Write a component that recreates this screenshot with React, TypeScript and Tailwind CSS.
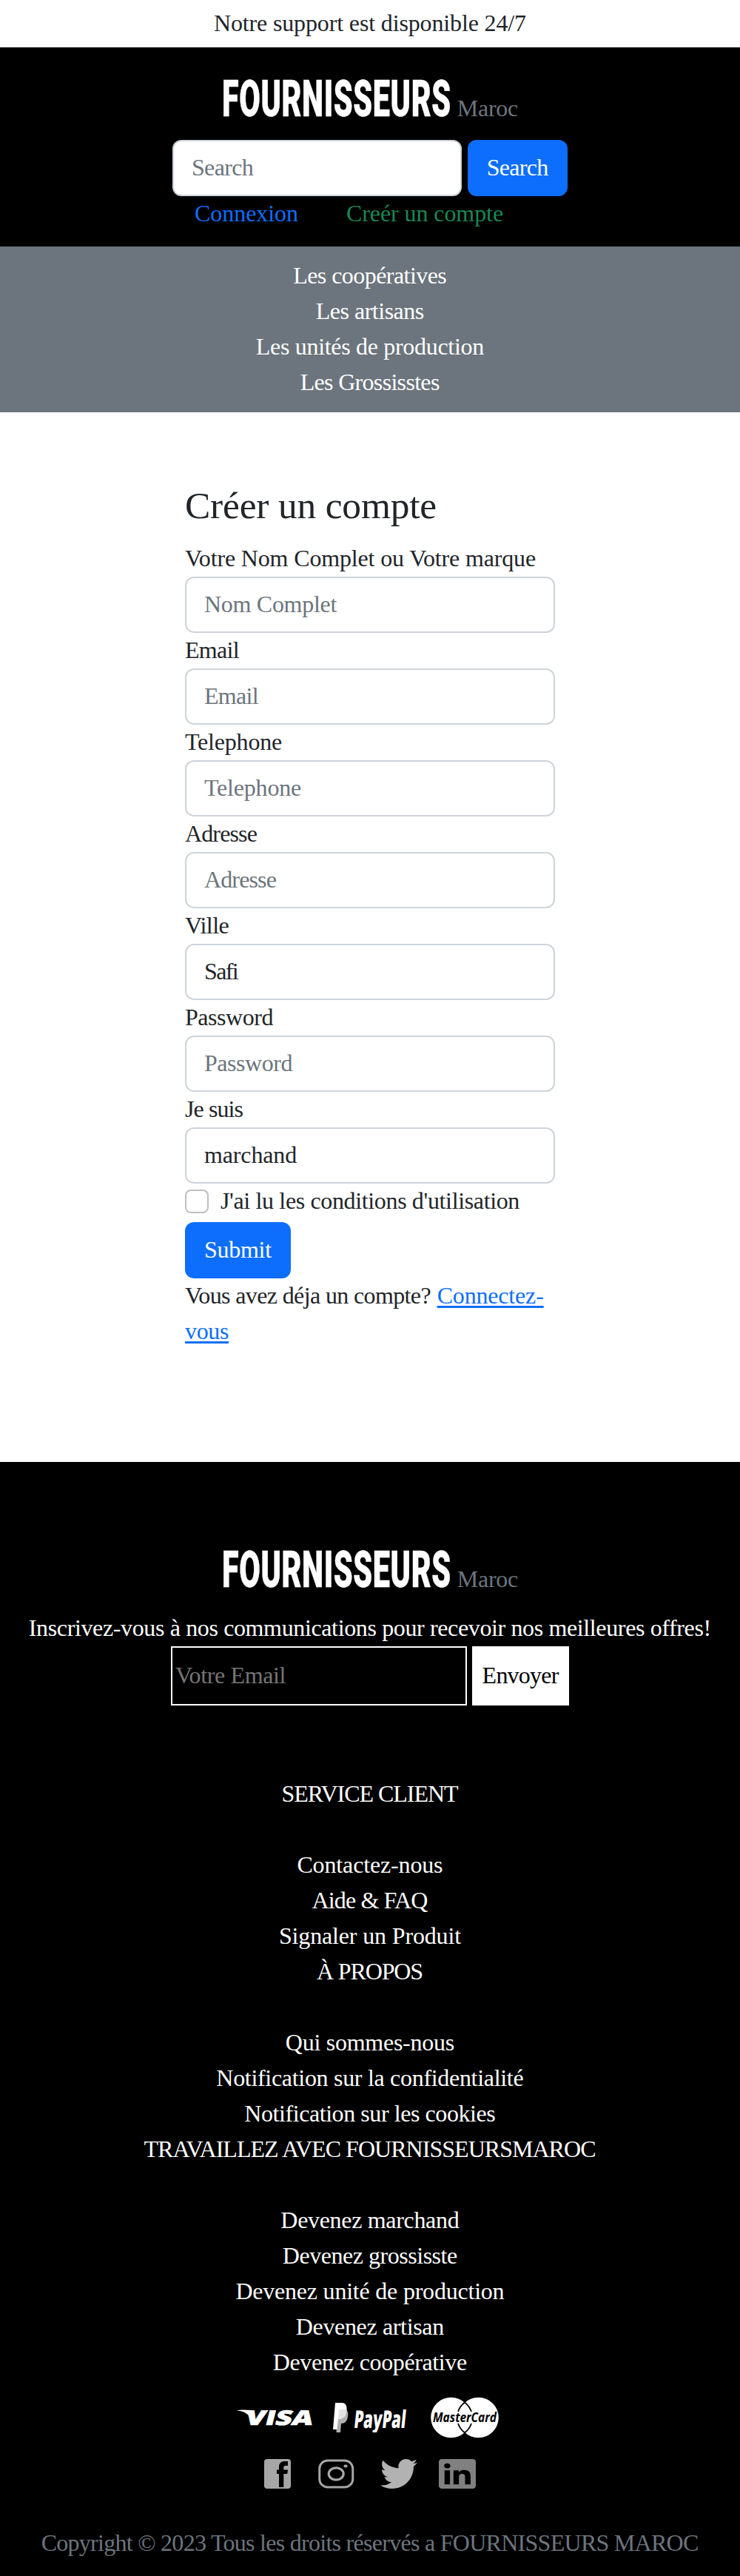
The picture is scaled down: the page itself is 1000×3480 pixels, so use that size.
import { useLayoutEffect, useRef, useState } from "react";
import type { CSSProperties, ReactNode } from "react";
import { FaLinkedin, FaTwitter } from "react-icons/fa";

type FitProps = { children: string; w: number; className?: string };

/** Text whose tracking is adjusted so the line is exactly `w` pixels wide. */
function Fit({ children, w, className = "" }: FitProps) {
  const ref = useRef<HTMLSpanElement>(null);
  const [style, setStyle] = useState<CSSProperties>({});
  useLayoutEffect(() => {
    const natural = ref.current!.getBoundingClientRect().width;
    const s = (w - natural) / children.length;
    setStyle({ letterSpacing: `${s}px`, marginRight: `${-s}px` });
  }, [w, children]);
  return (
    <span ref={ref} style={style} className={`relative -top-px inline-block whitespace-nowrap ${className}`}>
      {children}
    </span>
  );
}

/** Condensed brand name, squeezed horizontally to a fixed width. */
function Wordmark() {
  const ref = useRef<HTMLSpanElement>(null);
  const [style, setStyle] = useState<CSSProperties>({});
  useLayoutEffect(() => {
    setStyle({ transform: `scaleX(${310 / ref.current!.offsetWidth})` });
  }, []);
  return (
    <div className="flex h-[84px] items-baseline justify-center">
      <span className="inline-block w-[310px] text-left">
        <span
          ref={ref}
          style={style}
          className="inline-block origin-left font-['Roboto'] text-[69px] leading-[84px] font-black tracking-[1px] text-white [-webkit-text-stroke:0.5px_white]"
        >
          FOURNISSEURS
        </span>
      </span>
      <span className="ml-2 text-left text-[#6c757d]">
        <Fit w={82} className="top-0">Maroc</Fit>
      </span>
    </div>
  );
}

function Line({ children, w }: { children: string; w: number }) {
  return (
    <li className="h-12">
      <Fit w={w}>{children}</Fit>
    </li>
  );
}

type FieldProps = { label: string; lw: number; text: string; tw: number; filled?: boolean };

function Field({ label, lw, text, tw, filled }: FieldProps) {
  return (
    <div>
      <div className="h-12">
        <Fit w={lw}>{label}</Fit>
      </div>
      <div
        className={`flex h-19 items-center rounded-xl border-2 border-[#ced4da] bg-white px-6 ${
          filled ? "text-[#212529]" : "text-[#6c757d]"
        }`}
      >
        <Fit w={tw}>{text}</Fit>
      </div>
    </div>
  );
}

function Section({ title, w, children }: { title: string; w: number; children: ReactNode }) {
  return (
    <section>
      <h3 className="mb-12 h-12">
        <Fit w={w}>{title}</Fit>
      </h3>
      <ul>{children}</ul>
    </section>
  );
}

function Visa() {
  return (
    <svg width="100" height="22" viewBox="0 0 100 22" className="overflow-visible">
      <path d="M0 1.2C4 .3 10 .3 18 1L23 9 20 14C14 5 7 2 0 1.8Z" fill="#fff" />
      <text
        transform="translate(9 20.7) skewX(-14)"
        fontFamily="Open Sans"
        fontWeight="800"
        fontSize="27.5"
        textLength="91"
        lengthAdjust="spacingAndGlyphs"
        fill="#fff"
        stroke="#fff"
        strokeWidth="0.7"
      >
        VISA
      </text>
    </svg>
  );
}

function PayPal() {
  return (
    <svg width="100" height="40" viewBox="0 0 100 40" className="overflow-hidden">
      <path d="M6 9H16C20 10 21 14 20 19C19 25 16 28 11 28L10 40H4.500Z" fill="#b0b0b0" />
      <path d="M3 0H12C17 0 19 4 18.500 10C18 18 14 22 7 22L5.500 36H0Z" fill="#fff" />
      <path d="M8 9H16C18 9.500 18.300 9.500 18.500 10C18 18 14 22 7 22Z" fill="#e4e4e4" />
      <text
        transform="translate(27.500 34) skewX(-6)"
        fontFamily="Open Sans"
        fontWeight="800"
        fontSize="33"
        textLength="70"
        lengthAdjust="spacingAndGlyphs"
        fill="#fff"
      >
        PayPal
      </text>
    </svg>
  );
}

function MasterCard() {
  return (
    <svg width="92" height="56" viewBox="0 0 92 56">
      <circle cx="27.500" cy="28" r="27.300" fill="#fff" />
      <circle cx="64.500" cy="28" r="27.300" fill="#fff" />
      <path
        d="M46 7.500Q39.500 12.500 37 20M46 7.500Q52.500 12.500 55 20M46 48.500Q39.500 43.500 37 36M46 48.500Q52.500 43.500 55 36"
        fill="none"
        stroke="#000"
        strokeWidth="1.800"
      />
      <text
        x="3"
        y="34"
        fontFamily="Open Sans"
        fontStyle="italic"
        fontWeight="700"
        fontSize="17"
        textLength="86"
        lengthAdjust="spacingAndGlyphs"
        fill="#000"
      >
        MasterCard
      </text>
    </svg>
  );
}

function Facebook() {
  return (
    <svg width="36" height="40" viewBox="0 0 36 40">
      <rect width="36" height="40" rx="4" fill="#a6a6a6" />
      <path
        d="M20 38V20H17V14.500H20V10.500C20 5.500 23 3 28 3H32V9H29C27 9 26.300 10 26.300 11.500V14.500H32L31.300 20H26.300V38Z"
        fill="#000"
      />
    </svg>
  );
}

function Instagram() {
  return (
    <svg width="49" height="40" viewBox="0 0 49 40" fill="none" stroke="#a6a6a6">
      <rect x="1.750" y="2" width="45" height="36" rx="11" strokeWidth="3" />
      <ellipse cx="24.200" cy="20" rx="10" ry="8.200" strokeWidth="3.200" />
      <ellipse cx="37" cy="9.500" rx="2.600" ry="2" fill="#a6a6a6" stroke="none" />
    </svg>
  );
}

export default function App() {
  return (
    <div className="h-[3480px] w-[1000px] overflow-hidden bg-white font-['Liberation_Serif',serif] text-[32px] leading-[48px] text-[#212529]">
      <div className="h-16 py-2 text-center">
        <Fit w={422}>Notre support est disponible 24/7</Fit>
      </div>

      <header className="h-[269px] bg-black pt-7">
        <Wordmark />
        <div className="mt-[13px] flex gap-2 pl-[233px]">
          <div className="flex h-19 w-[391px] items-center rounded-xl border-2 border-[#ced4da] bg-white px-6 text-[#6c757d]">
            <Fit w={83}>Search</Fit>
          </div>
          <button className="flex h-19 w-[135px] items-center justify-center rounded-xl bg-[#0d6efd] text-white">
            <Fit w={83}>Search</Fit>
          </button>
        </div>
        <div className="flex pl-[263px]">
          <a className="w-[205px] text-[#0d6efd]"><Fit w={140}>Connexion</Fit></a>
          <a className="text-[#198754]"><Fit w={212}>Creér un compte</Fit></a>
        </div>
      </header>

      <nav className="bg-[#6c757d] py-4 text-center text-white">
        <ul>
          <Line w={207}>Les coopératives</Line>
          <Line w={146}>Les artisans</Line>
          <Line w={308}>Les unités de production</Line>
          <Line w={188}>Les Grossisstes</Line>
        </ul>
      </nav>

      <main className="h-[1418px] pt-24">
        <div className="mx-auto w-[500px]">
          <h2 className="mb-4 h-[62px] text-[51.4px] leading-[62px]">
            <Fit w={340}>Créer un compte</Fit>
          </h2>
          <Field label="Votre Nom Complet ou Votre marque" lw={474} text="Nom Complet" tw={179} />
          <Field label="Email" lw={73} text="Email" tw={73} />
          <Field label="Telephone" lw={131} text="Telephone" tw={131} />
          <Field label="Adresse" lw={97} text="Adresse" tw={97} />
          <Field label="Ville" lw={59} text="Safi" tw={45} filled />
          <Field label="Password" lw={119} text="Password" tw={119} />
          <Field label="Je suis" lw={78} text="marchand" tw={125} filled />
          <div className="mb-1 flex h-12 items-center">
            <span className="mr-4 size-8 rounded-lg border-2 border-[#bfbfbf]" />
            <Fit w={404}>J'ai lu les conditions d'utilisation</Fit>
          </div>
          <button className="flex h-19 w-[143px] items-center justify-center rounded-xl bg-[#0d6efd] text-white">
            <Fit w={91}>Submit</Fit>
          </button>
          <p>
            <span className="flex h-12 gap-2">
              <Fit w={332}>Vous avez déja un compte?</Fit>
              <a className="text-[#0d6efd]">
                <Fit w={144} className="underline decoration-[3px] underline-offset-[3px]">Connectez-</Fit>
              </a>
            </span>
            <a className="block h-12 text-[#0d6efd]">
              <Fit w={59} className="underline decoration-[3px] underline-offset-[3px]">vous</Fit>
            </a>
          </p>
        </div>
      </main>

      <footer className="h-[1505px] bg-black pt-[104px] text-center text-white">
        <Wordmark />
        <p className="mt-[13px] h-12">
          <Fit w={922}>Inscrivez-vous à nos communications pour recevoir nos meilleures offres!</Fit>
        </p>
        <div className="flex h-20 justify-center gap-[7px]">
          <div className="flex w-[400px] items-center border-2 border-white pl-1 text-[#757575]">
            <Fit w={149}>Votre Email</Fit>
          </div>
          <button className="flex w-[131px] items-center justify-center bg-white text-black">
            <Fit w={103}>Envoyer</Fit>
          </button>
        </div>
        <div className="mt-24">
          <Section title="SERVICE CLIENT" w={238}>
            <Line w={197}>Contactez-nous</Line>
            <Line w={156}>{"Aide & FAQ"}</Line>
            <Line w={246}>Signaler un Produit</Line>
          </Section>
          <Section title="À PROPOS" w={143}>
            <Line w={228}>Qui sommes-nous</Line>
            <Line w={415}>Notification sur la confidentialité</Line>
            <Line w={339}>Notification sur les cookies</Line>
          </Section>
          <Section title="TRAVAILLEZ AVEC FOURNISSEURSMAROC" w={610}>
            <Line w={241}>Devenez marchand</Line>
            <Line w={236}>Devenez grossisste</Line>
            <Line w={363}>Devenez unité de production</Line>
            <Line w={200}>Devenez artisan</Line>
            <Line w={262}>Devenez coopérative</Line>
          </Section>
        </div>
        <div className="mt-[22px] flex h-14 items-center pl-[321px]">
          <Visa />
          <span className="ml-[29px] flex h-10"><PayPal /></span>
          <span className="ml-8"><MasterCard /></span>
        </div>
        <div className="mt-7 flex h-10 pl-[357px]">
          <Facebook />
          <span className="ml-[37px]"><Instagram /></span>
          <FaTwitter
            viewBox="0 48 512 416"
            preserveAspectRatio="none"
            className="ml-[35px] h-10 w-[50px] text-[#b2b2b2]"
          />
          <FaLinkedin
            viewBox="0 32 448 448"
            preserveAspectRatio="none"
            className="ml-[29px] h-10 w-[50px] rounded text-[#808080]"
          />
        </div>
        <p className="mt-[50px] h-12 text-[#6c757d]">
          <Fit w={888}>Copyright © 2023 Tous les droits réservés a FOURNISSEURS MAROC</Fit>
        </p>
      </footer>
    </div>
  );
}
